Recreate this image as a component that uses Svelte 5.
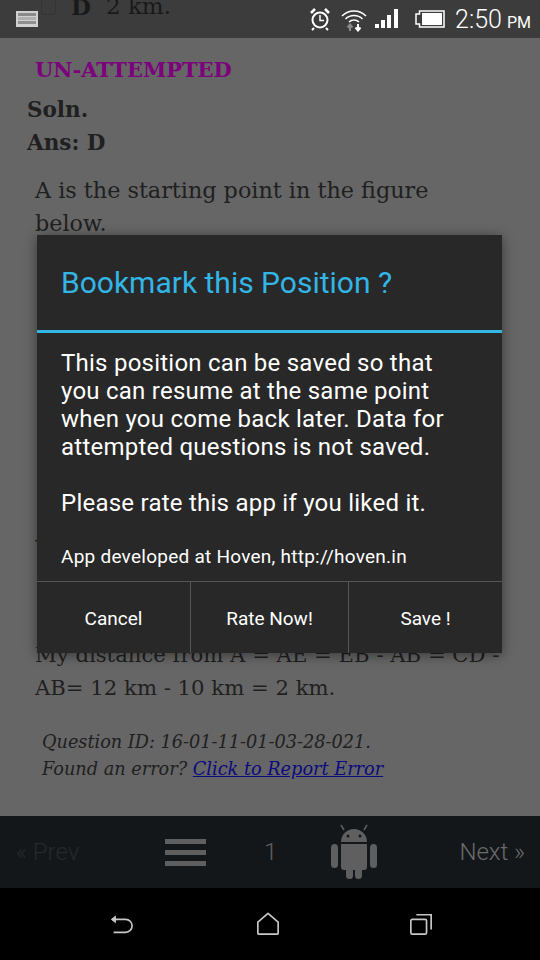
<script>
	const buttons = ['Cancel', 'Rate Now!', 'Save !'];
</script>

<div class="screen">
	<div class="status">
		<svg class="thumb" width="22" height="16" viewBox="0 0 22 16">
			<rect width="22" height="16" fill="#d0d0d0" />
			<rect x="2" y="2" width="18" height="3" fill="#8a8a8a" />
			<rect x="2" y="6" width="18" height="3" fill="#b0b0b0" />
			<rect x="2" y="10" width="18" height="3" fill="#8f8f8f" />
		</svg>
		<div class="status-icons">
			<svg width="20" height="24" viewBox="0 0 20 24" fill="none" stroke="#fff">
				<circle cx="10" cy="13" r="7.5" stroke-width="2" />
				<path d="M10 8v5.500h4" stroke-width="1.500" />
				<path d="M1 6l4-4M19 6l-4-4" stroke-width="2.500" />
				<path d="M4 21l-2 2M16 21l2 2" stroke-width="2" />
			</svg>
			<svg class="wifi" width="26" height="25" viewBox="0 0 26 25" fill="none" stroke="#fff" stroke-width="1.500">
				<path d="M1 9a17 17 0 0 1 24 0M4.500 12a12 12 0 0 1 17 0M8 15a7 7 0 0 1 10 0" />
				<path d="M9 24v-5M6.500 20.500L9 17.500l2.500 3" stroke="#8a8a8a" stroke-width="2" />
				<path d="M17 17v6M14.500 20.500l2.500 3 2.500-3" stroke-width="2" />
			</svg>
			<svg class="signal" width="24" height="20" viewBox="0 0 24 20" fill="#fff">
				<rect x="0" y="15" width="4" height="4" />
				<rect x="6" y="11" width="4" height="8" />
				<rect x="12" y="6" width="4" height="13" />
				<rect x="19" y="0" width="4" height="19" />
			</svg>
			<svg class="battery" width="30" height="18" viewBox="0 0 30 18">
				<path d="M4.500 1h24.500v16H4.500v-3H1V4h3.500z" fill="none" stroke="#fff" stroke-width="1.500" />
				<rect x="7" y="3" width="20" height="12" fill="#fff" />
			</svg>
			<span class="clock">2:50<small>PM</small></span>
		</div>
	</div>

	<div class="page">
		<div class="scroll">
			<div class="option">
				<span class="check"></span>
				<b>D</b>
				<span>2 km.</span>
			</div>
			<div class="attempt">UN-ATTEMPTED</div>
			<div class="soln first">Soln.</div>
			<div class="soln">Ans: D</div>
			<p class="intro">A is the starting point in the figure below.</p>
			<div class="figure"></div>
			<p class="walk">W</p>
			<p class="answer">My distance from A = AE = EB - AB = CD - AB= 12 km - 10 km = 2 km.</p>
			<p class="meta">
				Question ID: 16-01-11-01-03-28-021.<br />
				Found an error? <a href="#report">Click to Report Error</a>
			</p>
		</div>
	</div>

	<div class="pager">
		<span class="prev">« Prev</span>
		<span class="burger"><i></i><i></i><i></i></span>
		<span class="num">1</span>
		<svg class="droid" width="46" height="56" viewBox="0 0 46 56" fill="#5f5f5f">
			<path d="M10 19a13 13 0 0 1 26 0z" />
			<path d="M13 7l-3-5M33 7l3-5" stroke="#5f5f5f" stroke-width="1.500" />
			<circle cx="17" cy="13" r="1.500" fill="#14171a" />
			<circle cx="29" cy="13" r="1.500" fill="#14171a" />
			<rect x="0" y="21" width="7" height="24" rx="3.500" />
			<rect x="39" y="21" width="7" height="24" rx="3.500" />
			<path d="M10 21h26v23a3 3 0 0 1-3 3H13a3 3 0 0 1-3-3z" />
			<rect x="15" y="42" width="7" height="14" rx="3.500" />
			<rect x="24" y="42" width="7" height="14" rx="3.500" />
		</svg>
		<span class="next">Next »</span>
	</div>

	<div class="softkeys">
		<svg width="24" height="24" viewBox="0 0 26 26" fill="none" stroke="#c8c8c8" stroke-width="1.800">
			<path d="M4 8h14a6.500 6.500 0 0 1 0 14H5" />
			<path d="M7 4.500L2.500 8 7 11.500z" fill="#c8c8c8" stroke-width="1" />
		</svg>
		<svg width="24" height="24" viewBox="0 0 26 26" fill="none" stroke="#c8c8c8" stroke-width="1.800">
			<path d="M13 1.500L24 11v12a1 1 0 0 1-1 1H3a1 1 0 0 1-1-1V11z" stroke-linejoin="round" />
		</svg>
		<svg class="recents" width="24" height="24" viewBox="0 0 26 26" fill="none" stroke="#c8c8c8" stroke-width="1.800">
			<rect x="2" y="8" width="17" height="16" rx="1.500" />
			<path d="M8 3h16v16" />
		</svg>
	</div>

	<div class="dialog">
		<div class="dialog-title">Bookmark this Position ?</div>
		<div class="dialog-body">
			<p>This position can be saved so that you can resume at the same point when you come back later. Data for attempted questions is not saved.</p>
			<p class="rate">Please rate this app if you liked it.</p>
			<p class="credit">App developed at Hoven, http://hoven.in</p>
		</div>
		<div class="dialog-buttons">
			{#each buttons as label}
				<button>{label}</button>
			{/each}
		</div>
	</div>
</div>

<style>
	:global(body) {
		margin: 0;
		background: #000;
	}

	.screen {
		position: relative;
		display: flex;
		flex-direction: column;
		width: 540px;
		height: 960px;
		overflow: hidden;
		font-family: Roboto, sans-serif;
	}

	.status {
		position: absolute;
		top: 0;
		left: 0;
		right: 0;
		height: 38px;
		display: flex;
		align-items: center;
		justify-content: space-between;
		padding: 0 9px 0 16px;
		box-sizing: border-box;
		background: rgba(26, 26, 26, 0.55);
		z-index: 1;
	}

	.status-icons {
		display: flex;
		align-items: center;
	}

	.wifi {
		margin-left: 11px;
	}

	.signal {
		margin-left: 8px;
	}

	.battery {
		margin-left: 16px;
	}

	.clock {
		margin-left: 10px;
		color: #fff;
		font-size: 25px;
		font-weight: 300;
	}

	.clock small {
		margin-left: 5px;
		font-size: 16px;
		font-weight: 400;
	}

	.page {
		flex: 1;
		overflow: hidden;
		background: #666;
		color: #202020;
		font-family: 'DejaVu Serif', serif;
		font-size: 22.300px;
	}

	.scroll {
		margin-top: -8px;
	}

	.option {
		display: flex;
		align-items: center;
		gap: 15px;
		height: 28px;
		padding-left: 41px;
		color: #1a1a1a;
		font-size: 23px;
	}

	.check {
		width: 13px;
		height: 16px;
		border: 1px solid #555;
		border-radius: 3px;
	}

	.attempt {
		margin: 35px 0 0 35px;
		color: #7d007d;
		font-weight: bold;
		font-size: 21px;
		line-height: 30px;
	}

	.soln {
		margin-left: 27px;
		font-weight: bold;
		font-size: 21.500px;
		line-height: 33px;
	}

	.first {
		margin-top: 8px;
	}

	.intro {
		margin: 15px 50px 0 35px;
		line-height: 33px;
	}

	.figure {
		height: 292px;
	}

	.walk {
		margin: 0 0 0 35px;
		line-height: 33px;
	}

	.answer {
		margin: 73px 30px 0 35px;
		font-size: 21.200px;
		line-height: 33px;
	}

	.meta {
		margin: 25px 0 0 42px;
		font-style: italic;
		font-size: 17.700px;
		line-height: 27px;
	}

	.meta a {
		color: #0b0b80;
	}

	.pager {
		display: flex;
		align-items: center;
		height: 72px;
		background: #14171a;
		font-size: 24px;
		font-weight: 300;
		flex-shrink: 0;
	}

	.prev {
		margin-left: 16px;
		width: 149px;
		color: #26292c;
	}

	.burger {
		display: flex;
		flex-direction: column;
		gap: 6px;
		width: 41px;
	}

	.burger i {
		height: 5px;
		background: #5f5f5f;
	}

	.num {
		margin-left: 58px;
		width: 14px;
		color: #5f5f5f;
	}

	.droid {
		margin: -2px 0 0 53px;
	}

	.next {
		margin-left: auto;
		margin-right: 15px;
		color: #6a6a6a;
	}

	.softkeys {
		display: flex;
		align-items: center;
		gap: 123px;
		height: 72px;
		padding-left: 109px;
		background: #000;
		flex-shrink: 0;
	}

	.recents {
		margin-left: 6px;
	}

	.dialog {
		position: absolute;
		top: 235px;
		left: 37px;
		width: 465px;
		height: 418px;
		display: flex;
		flex-direction: column;
		background: #282828;
		box-shadow: 0 2px 12px rgba(0, 0, 0, 0.45);
		color: #fff;
		z-index: 2;
	}

	.dialog-title {
		height: 98px;
		padding-left: 24px;
		box-sizing: border-box;
		line-height: 95px;
		font-size: 30px;
		color: #33b5e5;
		border-bottom: 3px solid #33b5e5;
		flex-shrink: 0;
	}

	.dialog-body {
		flex: 1;
		padding: 16px 50px 0 24px;
		font-size: 24px;
		letter-spacing: 0.24px;
		line-height: 28px;
	}

	.dialog-body p {
		margin: 0;
	}

	.dialog-body .rate {
		margin-top: 28px;
	}

	.dialog-body .credit {
		margin: 26px -40px 0 0;
		font-size: 19px;
		letter-spacing: 0.25px;
	}

	.dialog-buttons {
		display: grid;
		grid-template-columns: 153px 158px 154px;
		height: 71px;
		border-top: 1px solid #555;
		flex-shrink: 0;
	}

	.dialog-buttons button {
		padding: 2px 0 0;
		border: none;
		border-left: 1px solid #555;
		background: none;
		color: #fff;
		font: 19px Roboto, sans-serif;
	}

	.dialog-buttons button:first-child {
		border-left: none;
	}
</style>
